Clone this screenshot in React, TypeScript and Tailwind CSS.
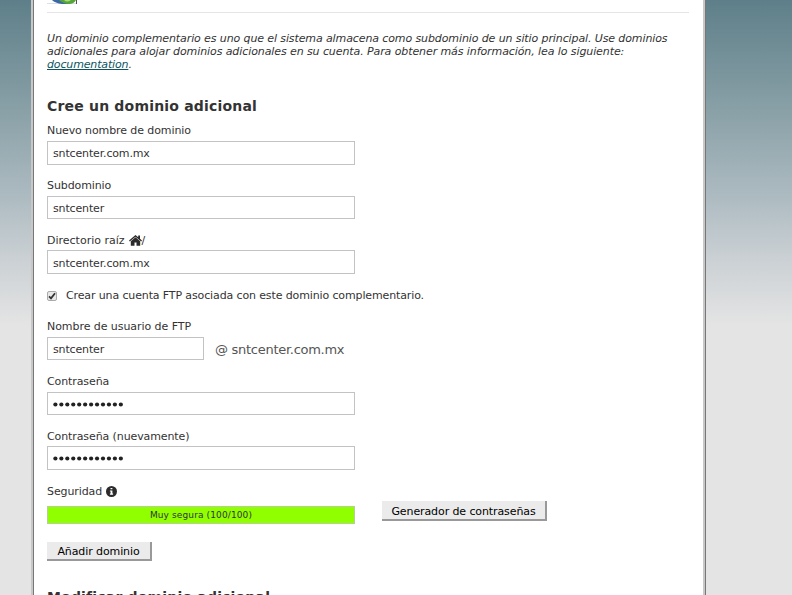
import React from "react";

type FieldProps = {
  label: React.ReactNode;
  children: React.ReactNode;
};

function Field({ label, children }: FieldProps) {
  return (
    <div className="flex h-[55px] flex-col">
      <div className="flex h-[22px] items-center whitespace-nowrap">{label}</div>
      {children}
    </div>
  );
}

function Box({ value, className = "" }: { value: string; className?: string }) {
  return (
    <div className={`flex shrink-0 items-center border border-[#c3c3c3] bg-white pl-[5px] tracking-[-0.15px] text-[#333] ${className}`}>
      <span>{value}</span>
    </div>
  );
}

function Password({ className = "" }: { className?: string }) {
  return (
    <div className={`flex shrink-0 items-center border border-[#c3c3c3] bg-white pl-[5px] ${className}`}>
      <svg className="h-[5px] w-[72px]" viewBox="0 0 72 5" fill="#222">
        {Array.from({ length: 12 }, (_, i) => (
          <circle key={i} cx={2.4 + i * 5.95} cy={2.5} r={2.1} />
        ))}
      </svg>
    </div>
  );
}

function HomeIcon() {
  return (
    <svg className="ml-[4px] h-[11px] w-[13px]" viewBox="0 0 13 11" fill="#2b2b2b">
      <path d="M6.500 0 0 5.500l.8.9L6.500 1.700l5.700 4.700.8-.9-2-1.700V.6H9.200v1.600z" />
      <path d="M6.500 2.300 1.800 6.200V10.800h3.700V7.500h2V10.800H11.200V6.200z" />
    </svg>
  );
}

function InfoIcon() {
  return (
    <svg className="ml-1 h-[11px] w-[11px]" viewBox="0 0 11 11">
      <circle cx="5.500" cy="5.500" r="5.500" fill="#2b2b2b" />
      <path d="M4.500 1.900h1.900v1.300h-1.900zM3.900 4.400h2.500v3.200h.7v1.100H3.900V7.600h.7V5.500h-.7z" fill="#fff" />
    </svg>
  );
}

export default function App() {
  return (
    <div className="flex h-[595px] w-[792px] overflow-hidden bg-[linear-gradient(to_bottom,#5e7f89_0px,#859da4_100px,#aebcc2_200px,#c9cfd3_255px,#e4e4e4_325px)] font-['DejaVu_Sans',sans-serif] text-[11px] leading-[13px] tracking-[-0.1px] text-[#333]">
      <main className="ml-[31px] h-[620px] w-[675px] shrink-0 border-r border-l-2 border-l-[#c8c8c8] border-r-[#777]">
        <div className="h-full border-r-2 border-l border-l-[#777] border-r-[#c8c8c8] bg-white pl-[13px]">
          <header className="flex h-[13px] w-[642px] items-start border-b border-[#e5e5e5]">
            <svg className="h-[5px] w-[32px]" viewBox="0 0 32 5">
              <path d="M0 3.500h29" stroke="#d5e2ea" />
              <path d="M5 0q3 3 10 4h8V0z" fill="#3d67a3" />
              <path d="M12 0q5 4 10 4 5 0 7-4z" fill="#55a637" />
              <path d="M17 0q3 3 7 0z" fill="#a6db75" />
              <path d="M29.500 0v4" stroke="#555" />
            </svg>
          </header>

          <p className="mt-[19px] whitespace-nowrap italic">
            <span className="tracking-[-0.107px]">Un dominio complementario es uno que el sistema almacena como subdominio de un sitio principal. Use dominios</span>
            <br />
            <span className="tracking-[-0.09px]">adicionales para alojar dominios adicionales en su cuenta. Para obtener más información, lea lo siguiente:</span>
            <br />
            <a className="tracking-[-0.15px] text-[#0d5560] underline">documentation</a>.
          </p>

          <h2 className="mt-[24px] flex h-[22px] items-center whitespace-nowrap text-[14px] font-bold tracking-[0.19px]">Cree un dominio adicional</h2>

          <div className="mt-[2px]">
            <Field label={<span>Nuevo nombre de dominio</span>}>
              <Box value="sntcenter.com.mx" className="h-[24px] w-[308px]" />
            </Field>
          </div>
          <Field label={<span>Subdominio</span>}>
            <Box value="sntcenter" className="h-[23px] w-[308px] pt-px" />
          </Field>
          <div className="flex h-[54px] flex-col">
            <div className="flex h-[21px] items-center pt-px"><span className="tracking-normal">Directorio raíz</span><HomeIcon /><span>/</span></div>
            <Box value="sntcenter.com.mx" className="h-[24px] w-[308px] pt-[2px]" />
          </div>

          <div className="flex h-[24px] items-center">
            <span className="mt-px flex h-[10px] w-[10px] items-center justify-center rounded-[2px] border border-[#aaa] bg-[#e8e8e8]">
              <svg className="h-[8px] w-[8px] shrink-0" viewBox="0 0 8 8" fill="none">
                <path d="M1 4.300 3 6.300 7 1.300" stroke="#333" strokeWidth="1.800" />
              </svg>
            </span>
            <span className="ml-[9px] whitespace-nowrap tracking-[-0.125px]">Crear una cuenta FTP asociada con este dominio complementario.</span>
          </div>

          <div className="mt-[8px]">
            <Field label={<span className="tracking-[-0.06px]">Nombre de usuario de FTP</span>}>
              <div className="flex items-center">
                <Box value="sntcenter" className="h-[23px] w-[157px] pt-px" />
                <span className="ml-[11px] mt-[2px] whitespace-nowrap text-[13px] tracking-[-0.28px] text-[#555]">@ sntcenter.com.mx</span>
              </div>
            </Field>
          </div>
          <Field label={<span>Contraseña</span>}>
            <Password className="h-[23px] w-[308px] pt-px" />
          </Field>
          <div className="flex h-[54px] flex-col">
            <div className="flex h-[21px] items-center pt-px"><span>Contraseña (nuevamente)</span></div>
            <Password className="h-[24px] w-[308px] pt-px" />
          </div>

          <div className="flex h-[50px]">
            <div className="w-[335px]">
              <div className="flex h-[22px] items-center pt-[2px]"><span>Seguridad</span><InfoIcon /></div>
              <div className="mt-[5px] flex h-[18px] w-[308px] items-center justify-center border border-[#b5cf94] bg-[#90ff00] text-[9px] tracking-[0.12px]">Muy segura (100/100)</div>
            </div>
            <button className="mt-[22px] flex h-[20px] w-[165px] items-center justify-center whitespace-nowrap border-r-2 border-b-2 border-[#999] bg-[#ebebeb] pt-[2px] text-black">Generador de contraseñas</button>
          </div>

          <button className="mt-[13px] flex h-[19px] w-[105px] items-center justify-center whitespace-nowrap border-r-2 border-b-2 border-[#999] bg-[#ebebeb] pt-[2px] text-black">Añadir dominio</button>

          <h2 className="mt-[25px] flex h-[22px] items-center whitespace-nowrap text-[14px] font-bold tracking-[0.18px]">Modificar dominio adicional</h2>
        </div>
      </main>
    </div>
  );
}
